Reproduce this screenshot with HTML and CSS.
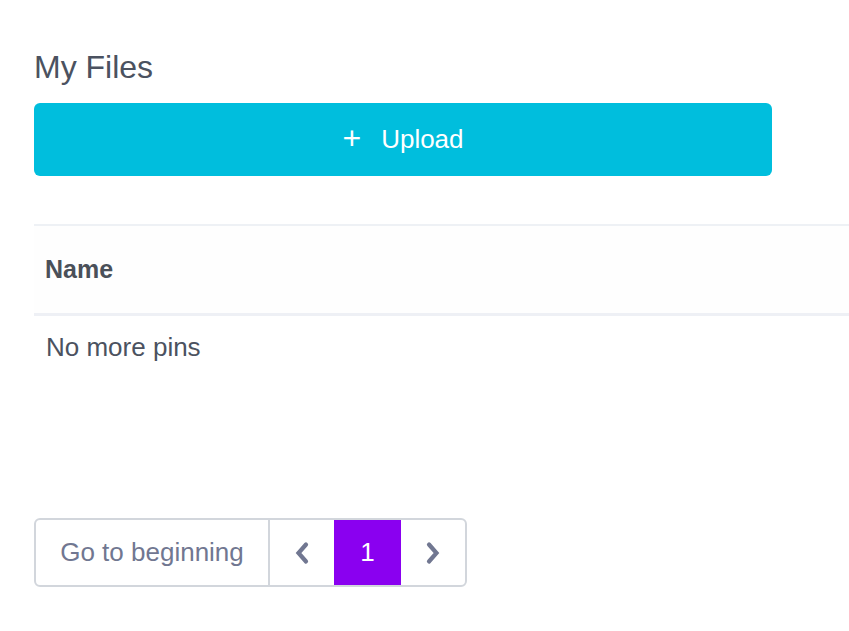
FILE: index.html
```html
<!DOCTYPE html>
<html>
<head>
<meta charset="utf-8">
<link rel="stylesheet" href="styles.css">
</head>
<body>
<main class="page">
  <h1 class="title">My Files</h1>
  <button class="upload"><span class="plus">+</span><span>Upload</span></button>
  <div class="table">
    <div class="thead">Name</div>
    <div class="row">No more pins</div>
  </div>
  <nav class="pager">
    <div class="cell begin">Go to beginning</div>
    <div class="cell arrow">
      <svg width="16" height="24" viewBox="0 0 16 24"><path d="M12 3.5 L4.5 12 L12 20.5" fill="none" stroke="currentColor" stroke-width="4.2" stroke-linecap="round" stroke-linejoin="miter"/></svg>
    </div>
    <div class="cell current">1</div>
    <div class="cell arrow last">
      <svg width="16" height="24" viewBox="0 0 16 24"><path d="M4 3.5 L11.5 12 L4 20.5" fill="none" stroke="currentColor" stroke-width="4.2" stroke-linecap="round" stroke-linejoin="miter"/></svg>
    </div>
  </nav>
</main>
</body>
</html>
```
FILE: styles.css
```css
html, body {
  margin: 0;
  padding: 0;
  background: #ffffff;
  font-family: "Liberation Sans", Arial, sans-serif;
  color: #4b5260;
}
.page {
  padding: 48px 0 0 34px;
}
.title {
  margin: 0;
  font-size: 32px;
  font-weight: 400;
  line-height: 38px;
  color: #4b5260;
}
.upload {
  margin-top: 17px;
  width: 738px;
  height: 73px;
  border: 0;
  border-radius: 6px;
  background: #00bedd;
  color: #ffffff;
  font-family: "Liberation Sans", Arial, sans-serif;
  font-size: 26px;
  display: flex;
  align-items: center;
  justify-content: center;
  gap: 20px;
  padding: 0;
}
.plus {
  font-size: 32px;
  line-height: 1;
  margin-top: -4px;
}
.table {
  margin-top: 48px;
  border-top: 2px solid #eef1f5;
}
.thead {
  height: 87px;
  display: flex;
  align-items: center;
  padding-left: 11px;
  font-size: 25px;
  font-weight: 700;
  background: #fefefe;
  border-bottom: 3px solid #eef0f5;
  color: #4a5059;
}
.row {
  padding: 12px 0 0 12px;
  font-size: 26px;
  line-height: 39px;
  color: #4b5260;
}
.pager {
  margin-top: 151px;
  display: inline-flex;
  height: 65px;
  border: 2px solid #d2d6dc;
  border-radius: 6px;
  overflow: hidden;
}
.cell {
  display: flex;
  align-items: center;
  justify-content: center;
  color: #717791;
  font-size: 26px;
}
.begin {
  width: 232px;
  border-right: 2px solid #d2d6dc;
}
.arrow {
  width: 64px;
}
.current {
  width: 67px;
  background: #8a00f0;
  color: #ffffff;
}
```
